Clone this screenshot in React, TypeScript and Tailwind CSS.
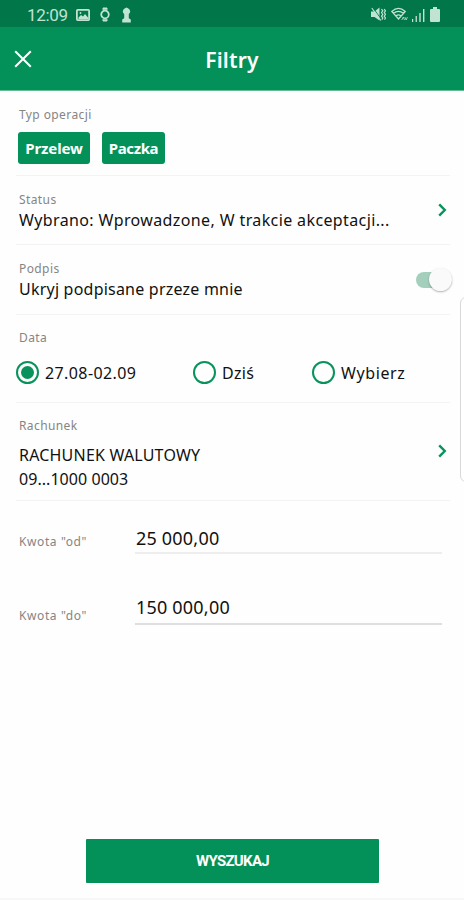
import { useState } from "react";
import type { ReactNode } from "react";

const dates = [
  { id: "range", label: "27.08-02.09", width: "w-[177px]", tracking: "tracking-[0.4px]" },
  { id: "today", label: "Dziś", width: "w-[119px]", tracking: "tracking-[0.3px]" },
  { id: "custom", label: "Wybierz", width: "w-[110px]", tracking: "tracking-[0.6px]" },
];

const labelClass = "block text-[12px] leading-4 tracking-[0.4px] text-[#858585]";
const valueClass = "text-[16px] leading-5 text-[#111] whitespace-nowrap";

function StatusBar() {
  return (
    <div className="h-[27px] bg-[#007649] flex items-center justify-between pl-[27px] pr-6 pt-[2px] text-[#c0e3d2]">
      <div className="flex items-center">
        <span className="font-[Roboto,sans-serif] text-[17px] leading-5 w-[49px] tracking-[-0.3px] whitespace-nowrap">12:09</span>
        <svg className="w-[14px] h-[12px]" viewBox="0 0 14 12" fill="none" stroke="currentColor" strokeWidth="1.8">
          <rect x="0.9" y="0.9" width="12.2" height="10.2" rx="0.8" />
          <path d="M2.5 8.5 5 6l2 1.5L9 5l3 3.5V10H2.5z" fill="currentColor" stroke="none" />
          <circle cx="4.5" cy="4" r="0.9" fill="currentColor" stroke="none" />
        </svg>
        <svg className="ml-[10px] w-[10px] h-[15px]" viewBox="0 0 10 15" fill="none" stroke="currentColor" strokeWidth="1.8">
          <circle cx="5" cy="7.5" r="3.8" />
          <path d="M3 2.8V1h4v1.8M3 12.2V14h4v-1.8" fill="currentColor" strokeWidth="1" />
        </svg>
        <svg className="ml-[12px] w-[9px] h-[16px]" viewBox="0 0 9 16" fill="currentColor">
          <path d="M4.5 0.5 6 1.2A3.6 3.6 0 0 1 8.2 4.2C8.2 5.6 7.4 6.4 6.8 7v4.2L8.8 12.5v3H.2v-3l2-1.3V7C1.6 6.4.8 5.6.8 4.2A3.6 3.6 0 0 1 3 1.2z" />
        </svg>
      </div>
      <div className="flex items-center">
        <svg className="w-[15px] h-[15px]" viewBox="0 0 15 15" fill="currentColor">
          <path d="M0 4.5h3.5l5-4v13l-5-3.5H0z" />
          <path d="m1.8 0.5 9 12.5" stroke="#007649" strokeWidth="0.9" />
          <path d="m0.8 1 9 12.5" stroke="currentColor" strokeWidth="1.2" />
          <path d="M10.5 2l1.3 1.8-1.3 1.8 1.3 1.8-1.3 1.8 1.3 1.8-1 1.6M13.2 2l1.3 1.8-1.3 1.8 1.3 1.8-1.3 1.8 1.3 1.8-1 1.6" fill="none" stroke="currentColor" strokeWidth="1.2" />
        </svg>
        <svg className="ml-[5px] w-[17px] h-[15px]" viewBox="0 0 17 15" fill="none" stroke="currentColor" strokeWidth="1.3">
          <path d="M0.8 4.5C5 .5 10 .5 14.2 4.5L7.5 12zM2.5 6.5c3-2.7 7-2.7 10 0M5 9c1.5-1.3 3.5-1.3 5 0" />
          <path d="m10.8 13 1.5-3 1.2 3M13.8 10l1.4 3 1.2-3" strokeWidth="0.8" />
        </svg>
        <svg className="ml-[4px] w-[13px] h-[14px]" viewBox="0 0 13 14" fill="currentColor">
          <path d="M0 11h1.2v3H0zM3.6 8h1.3v6H3.6zM7.3 5h1.4v9H7.3zM11 1h1.4v13H11z" />
        </svg>
        <svg className="ml-[5px] w-[10px] h-[15px]" viewBox="0 0 10 15" fill="currentColor">
          <path d="M3 0h4v2h2a1 1 0 0 1 1 1v11a1 1 0 0 1-1 1H1a1 1 0 0 1-1-1V3a1 1 0 0 1 1-1h2z" />
        </svg>
      </div>
    </div>
  );
}

function Chevron() {
  return (
    <svg className="w-[9px] h-[14px] shrink-0" viewBox="0 0 9 14" fill="none" stroke="#07935b" strokeWidth="2.4">
      <path d="m1.2 1.3 5.6 5.7-5.6 5.7" />
    </svg>
  );
}

function Section({ className, children }: { className: string; children: ReactNode }) {
  return <section className={`ml-4 mr-[14px] pl-[3px] border-b border-[#f3f3f3] ${className}`}>{children}</section>;
}

export default function App() {
  const [date, setDate] = useState("range");
  const [hideSigned, setHideSigned] = useState(true);
  const [from, setFrom] = useState("25 000,00");
  const [to, setTo] = useState("150 000,00");

  return (
    <main className="relative w-[464px] h-[900px] overflow-hidden bg-[#fefefe] flex flex-col font-['Noto_Sans',sans-serif]">
      <StatusBar />
      <header className="h-[64px] bg-[#049159] border-b border-[#63bd94] flex items-center text-white">
        <button className="ml-[14px] w-[18px] h-[18px]">
          <svg viewBox="0 0 18 18" fill="none" stroke="currentColor" strokeWidth="2">
            <path d="m1.2 1.2 15.6 15.6M16.8 1.2 1.2 16.8" />
          </svg>
        </button>
        <h1 className="flex-1 text-center pr-[32px] pt-[4px] text-[21px] font-semibold tracking-[0.2px]">Filtry</h1>
      </header>

      <Section className="h-[85px] pt-[16px]">
        <span className={labelClass}>Typ operacji</span>
        <div className="mt-[9px] -ml-px flex gap-[12px]">
          <button className="w-[72px] h-[32px] rounded-[3px] bg-[#049159] text-white text-[15px] font-bold tracking-[-0.1px]">Przelew</button>
          <button className="w-[63px] h-[32px] rounded-[3px] bg-[#049159] text-white text-[15px] font-bold tracking-[-0.4px]">Paczka</button>
        </div>
      </Section>

      <Section className="h-[69px] flex justify-between">
        <div className="pt-[16px]">
          <span className={labelClass}>Status</span>
          <p className={`${valueClass} mt-[2px] tracking-[0.38px]`}>Wybrano: Wprowadzone, W trakcie akceptacji...</p>
        </div>
        <div className="pt-[27px] pr-[3px]"><Chevron /></div>
      </Section>

      <Section className="h-[70px] flex justify-between">
        <div className="pt-[16px]">
          <span className={labelClass}>Podpis</span>
          <p className={`${valueClass} mt-[2px] tracking-[0.22px]`}>Ukryj podpisane przeze mnie</p>
        </div>
        <button role="switch" aria-checked={hideSigned} onClick={() => setHideSigned(!hideSigned)}
          className={`mt-[27px] mr-[-2px] w-[36px] h-[16px] rounded-full bg-[#a5cfbd] flex items-center ${hideSigned ? "justify-end" : ""}`}>
          <span className="w-[23px] h-[23px] -mt-[2px] shrink-0 rounded-full bg-[#fafafa] shadow-[0_1px_2px_rgba(0,0,0,0.3)]" />
        </button>
      </Section>

      <Section className="h-[88px] pt-[15px]">
        <span className={labelClass}>Data</span>
        <div className="mt-[15px] ml-[-3px] flex">
          {dates.map((d) => (
            <button key={d.id} onClick={() => setDate(d.id)} className={`flex items-center gap-[6px] ${d.width}`}>
              <span className="w-[23px] h-[23px] shrink-0 rounded-full border-2 border-[#07935b] flex items-center justify-center">
                {date === d.id && <span className="w-[13px] h-[13px] rounded-full bg-[#07935b]" />}
              </span>
              <span className={`${valueClass} ${d.tracking}`}>{d.label}</span>
            </button>
          ))}
        </div>
      </Section>

      <Section className="h-[98px] flex justify-between">
        <div className="pt-[15px]">
          <span className={labelClass}>Rachunek</span>
          <p className={`${valueClass} mt-[11px] tracking-[0.2px]`}>RACHUNEK WALUTOWY</p>
          <p className={`${valueClass} mt-[4px] tracking-[0.05px]`}>09...1000 0003</p>
        </div>
        <div className="pt-[41px] pr-[3px]"><Chevron /></div>
      </Section>

      <div className="pl-[19px] pr-[22px]">
        <div className="flex h-[53px]">
          <label htmlFor="from" className={`${labelClass} w-[116px] pt-[33px] tracking-[0.6px]`}>Kwota "od"</label>
          <input id="from" value={from} onChange={(e) => setFrom(e.target.value)}
            className="flex-1 min-w-0 pt-[23px] pl-px border-b-2 border-[#eeeeee] outline-none text-[18px] leading-[26px] tracking-[0.2px] text-[#111]" />
        </div>
        <div className="flex mt-[17px] h-[54px]">
          <label htmlFor="to" className={`${labelClass} w-[116px] pt-[37px] tracking-[0.6px]`}>Kwota "do"</label>
          <input id="to" value={to} onChange={(e) => setTo(e.target.value)}
            className="flex-1 min-w-0 pt-[20px] pl-px border-b-2 border-[#dfdfdf] outline-none text-[18px] leading-[26px] tracking-[0.2px] text-[#111]" />
        </div>
      </div>

      <button className="mt-auto mb-[15px] ml-[86px] w-[293px] h-[44px] shrink-0 rounded-[1px] bg-[#049159] text-white font-[Roboto,sans-serif] text-[15px] font-bold tracking-[-0.7px]">
        WYSZUKAJ
      </button>
      <div className="h-[2px] shrink-0 bg-[#f7f7f7]" />
      {/* edge panel handle */}
      <div className="absolute left-[460px] top-[297px] w-[12px] h-[185px] rounded-[7px] border border-[#d9d9d9] bg-white" />
    </main>
  );
}
